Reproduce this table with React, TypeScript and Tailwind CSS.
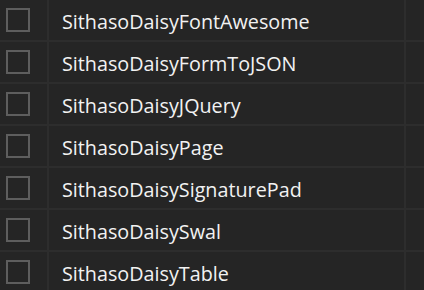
const items = [
  "SithasoDaisyFontAwesome",
  "SithasoDaisyFormToJSON",
  "SithasoDaisyJQuery",
  "SithasoDaisyPage",
  "SithasoDaisySignaturePad",
  "SithasoDaisySwal",
  "SithasoDaisyTable",
];

export default function App() {
  return (
    <main className="h-[290px] w-[424px] overflow-hidden bg-[#252525]" style={{ fontFamily: '"Open Sans", "Noto Sans", sans-serif' }}>
      {items.map((name) => (
        <div key={name} className="flex h-[42px] border-b-2 border-[#2d2d2d]">
          <div className="flex w-[49px] shrink-0 border-r-2 border-[#2d2d2d] pl-[6px] pt-[8px]">
            <div className="h-6 w-6 border-2 border-[#5e5e5e]" />
          </div>
          <div className="flex w-[357px] shrink-0 items-center border-r-2 border-[#2d2d2d] pl-[13px] pt-1 text-[19.75px] text-[#f2f2f2]">
            {name}
          </div>
        </div>
      ))}
    </main>
  );
}
